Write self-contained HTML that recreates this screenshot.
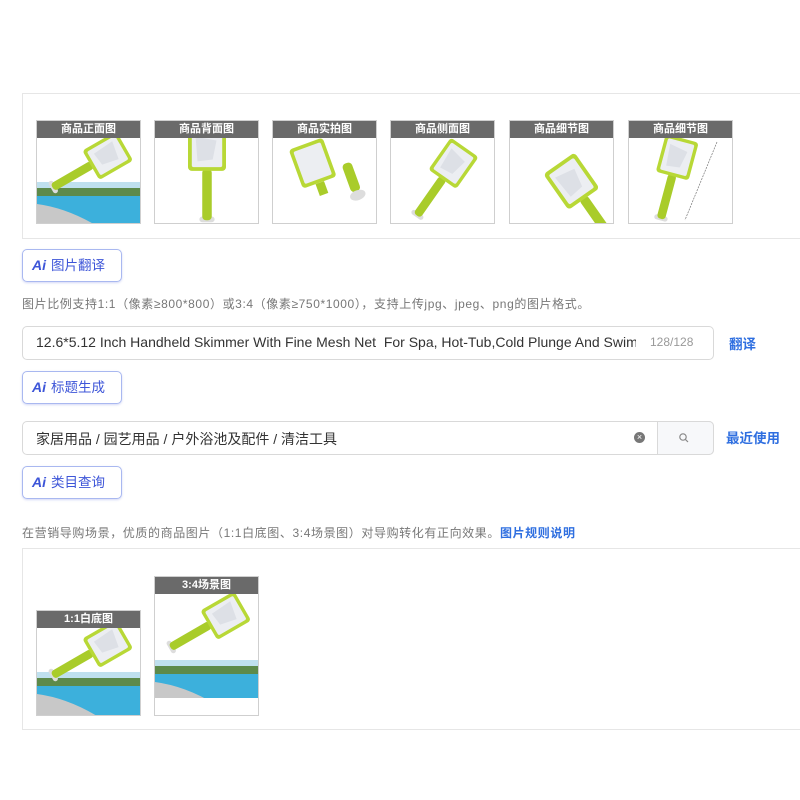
<!DOCTYPE html>
<html><head><meta charset="utf-8"><style>
*{margin:0;padding:0;box-sizing:border-box}
body{width:800px;height:800px;background:#fff;position:relative;overflow:hidden;font-family:"Liberation Sans","Noto Sans CJK SC",sans-serif}
.a{position:absolute}
.panel{position:absolute;left:22px;width:790px;border:1px solid #e6e6e6;border-right:none}
.th{position:absolute;width:105px;border:1px solid #cfcfcf;background:#fff;overflow:hidden}
.th .h{height:17px;background:#6a6a6a;color:#fff;font-size:11px;font-weight:bold;text-align:center;line-height:17px}
.th svg{display:block}
.ai{position:absolute;left:22px;width:100px;height:33px;border:1px solid #a9b8f0;border-radius:5px;color:#3d55d8;font-size:13.5px;line-height:31px;padding-left:9px;box-shadow:0 1px 2px rgba(80,100,220,.25)}
.ai b{font-style:italic;font-weight:bold;margin-right:5px;font-size:14px}
.hint{position:absolute;left:22px;font-size:12px;letter-spacing:.6px;color:#777;white-space:nowrap}
.inp{position:absolute;border:1px solid #d9d9d9;border-radius:5px;background:#fff}
.link{position:absolute;color:#2f6fe0;font-size:13.5px;font-weight:bold}
</style></head><body>
<svg width="0" height="0" style="position:absolute"><defs>
<g id="sk"><rect x="-8" y="70" width="16" height="6" rx="3" fill="#ddd"/><rect x="-5" y="20" width="10" height="54" rx="4" fill="#a9cc2a"/><rect x="-20" y="-24" width="40" height="46" rx="4" fill="#b8d836"/><rect x="-16" y="-20" width="32" height="38" rx="2" fill="#eceef2"/><path d="M-12 -14 L10 -10 L6 10 L-10 12Z" fill="#dde0e6"/></g>
<g id="pool"><rect x="0" y="0" width="105" height="50" fill="#fff"/><rect x="0" y="44" width="105" height="10" fill="#bfe0ee"/><rect x="0" y="50" width="105" height="10" fill="#5d8a4a"/><rect x="0" y="58" width="105" height="30" fill="#3cb0dc"/><path d="M0 66 Q30 70 60 88 L0 88Z" fill="#c8c8c8"/></g>
</defs></svg>

<div class="panel" style="top:93px;height:146px"></div>
<div class="th" style="left:36px;top:120px;height:104px"><div class="h">商品正面图</div><svg width="105" height="86"><use href="#pool"/><g transform="translate(70,18) rotate(60) scale(.85)"><use href="#sk"/></g></svg></div>
<div class="th" style="left:154px;top:120px;height:104px"><div class="h">商品背面图</div><svg width="105" height="86"><g transform="translate(52,12) scale(.95)"><use href="#sk"/></g></svg></div>
<div class="th" style="left:272px;top:120px;height:104px"><div class="h">商品实拍图</div><svg width="105" height="86"><g transform="translate(40,26) rotate(-20) scale(.9)"><rect x="-20" y="-24" width="40" height="46" rx="4" fill="#b8d836"/><rect x="-16" y="-20" width="32" height="38" rx="2" fill="#eceef2"/><rect x="-5" y="22" width="10" height="14" fill="#a9cc2a"/></g><g transform="translate(80,44) rotate(-20)"><rect x="-5" y="-20" width="10" height="30" rx="4" fill="#a9cc2a"/><ellipse cx="0" cy="14" rx="8" ry="5" fill="#ddd"/></g></svg></div>
<div class="th" style="left:390px;top:120px;height:104px"><div class="h">商品侧面图</div><svg width="105" height="86"><g transform="translate(62,26) rotate(35) scale(.85)"><use href="#sk"/></g></svg></div>
<div class="th" style="left:509px;top:120px;height:104px"><div class="h">商品细节图</div><svg width="105" height="86"><g transform="translate(62,44) rotate(-35) scale(.95)"><use href="#sk"/></g></svg></div>
<div class="th" style="left:628px;top:120px;height:104px"><div class="h">商品细节图</div><svg width="105" height="86"><g transform="translate(48,20) rotate(15) scale(.85)"><use href="#sk"/></g><line x1="88" y1="4" x2="56" y2="82" stroke="#777" stroke-width=".7" stroke-dasharray="2 1"/></svg></div>

<div class="ai" style="top:249px"><b>Ai</b>图片翻译</div>
<div class="hint" style="top:295px">图片比例支持1:1（像素≥800*800）或3:4（像素≥750*1000），支持上传jpg、jpeg、png的图片格式。</div>

<div class="inp" style="left:22px;top:326px;width:692px;height:34px"></div>
<div class="a" style="left:36px;top:334px;font-size:14px;color:#333;white-space:nowrap;width:600px;overflow:hidden">12.6*5.12 Inch Handheld Skimmer With Fine Mesh Net&nbsp; For Spa, Hot-Tub,Cold Plunge And Swim</div>
<div class="a" style="left:642px;top:334px;width:66px;background:#fff;font-size:12px;color:#999;padding-left:8px;line-height:16px">128/128</div>
<div class="link" style="left:729px;top:333px">翻译</div>

<div class="ai" style="top:371px"><b>Ai</b>标题生成</div>

<div class="inp" style="left:22px;top:421px;width:692px;height:34px"></div>
<div class="a" style="left:657px;top:421px;width:57px;height:34px;background:#f7f8fa;border:1px solid #d9d9d9;border-radius:0 5px 5px 0"></div>
<svg class="a" style="left:678px;top:432px" width="12" height="12"><circle cx="5" cy="5" r="3.2" fill="none" stroke="#888" stroke-width="1.2"/><line x1="7.4" y1="7.4" x2="10" y2="10" stroke="#888" stroke-width="1.2"/></svg>
<div class="a" style="left:36px;top:429px;font-size:14px;color:#333">家居用品 / 园艺用品 / 户外浴池及配件 / 清洁工具</div>
<div class="a" style="left:634px;top:432px;width:11px;height:11px;border-radius:50%;background:#777;color:#fff;font-size:9px;line-height:11px;text-align:center">×</div>
<div class="link" style="left:726px;top:427px">最近使用</div>

<div class="ai" style="top:466px"><b>Ai</b>类目查询</div>
<div class="hint" style="top:524px">在营销导购场景，优质的商品图片（1:1白底图、3:4场景图）对导购转化有正向效果。<span style="color:#2f6fe0;font-weight:bold">图片规则说明</span></div>

<div class="panel" style="top:548px;height:182px"></div>
<div class="th" style="left:36px;top:610px;height:106px"><div class="h">1:1白底图</div><svg width="105" height="88"><use href="#pool"/><g transform="translate(70,16) rotate(60) scale(.85)"><use href="#sk"/></g></svg></div>
<div class="th" style="left:154px;top:576px;height:140px"><div class="h">3:4场景图</div><svg width="105" height="122"><g transform="translate(0,22)"><use href="#pool"/></g><g transform="translate(70,22) rotate(60) scale(.85)"><use href="#sk"/></g><rect x="0" y="104" width="105" height="22" fill="#fff"/></svg></div>
</body></html>
